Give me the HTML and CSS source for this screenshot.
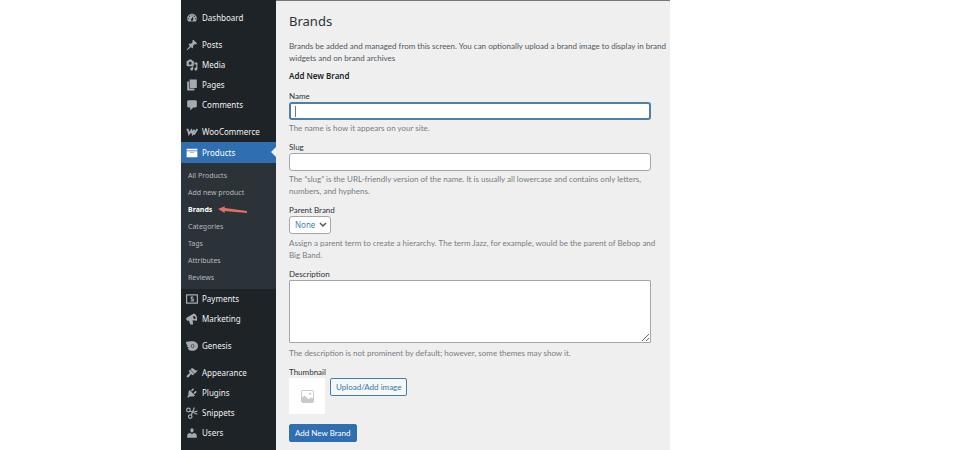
FILE: index.html
```
<!DOCTYPE html>
<html lang="en">
<head>
    <meta charset="UTF-8">
    <meta name="viewport" content="width=device-width, initial-scale=1.0">
    <title>Brands</title>
    <link rel="stylesheet" href="styles.css">
</head>
<body>
    <div class="admin">
        <nav class="menu">
            <a class="menu-item" href="#">
                <svg viewBox="0 0 20 20"><path d="M3.76 16h12.48c1.1-1.37 1.76-3.11 1.76-5 0-4.42-3.58-8-8-8s-8 3.58-8 8c0 1.89.66 3.63 1.76 5zM10 4c.55 0 1 .45 1 1s-.45 1-1 1-1-.45-1-1 .45-1 1-1zM6 6c.55 0 1 .45 1 1s-.45 1-1 1-1-.45-1-1 .45-1 1-1zm8 0c.55 0 1 .45 1 1s-.45 1-1 1-1-.45-1-1 .45-1 1-1zm-5.37 5.55L12 7v6c0 1.1-.9 2-2 2s-2-.9-2-2c0-.57.24-1.08.63-1.45zM4 10c.55 0 1 .45 1 1s-.45 1-1 1-1-.45-1-1 .45-1 1-1zm12 0c.55 0 1 .45 1 1s-.45 1-1 1-1-.45-1-1 .45-1 1-1z"/></svg>
                Dashboard
            </a>
            <a class="menu-item group-start" href="#">
                <svg viewBox="0 0 20 20"><path d="M10.44 3.02l1.82-1.82 6.36 6.35-1.83 1.82c-1.05-.68-2.48-.57-3.41.36l-.75.75c-.92.93-1.04 2.35-.35 3.41l-1.83 1.82-2.41-2.41-2.8 2.79c-.42.42-3.38 2.71-3.8 2.29s1.86-3.39 2.28-3.81l2.79-2.79L4.1 9.36l1.83-1.82c1.05.69 2.48.57 3.4-.36l.75-.75c.93-.92 1.05-2.35.36-3.41z"/></svg>
                Posts
            </a>
            <a class="menu-item" href="#">
                <svg viewBox="0 0 20 20"><path d="M13 11V4c0-.55-.45-1-1-1h-1.67L9 1H5L3.67 3H2c-.55 0-1 .45-1 1v7c0 .55.45 1 1 1h10c.55 0 1-.45 1-1zM7 4.5c1.38 0 2.5 1.12 2.5 2.5S8.38 9.5 7 9.5 4.5 8.38 4.5 7 5.62 4.5 7 4.5zM14 6h5v10.5c0 1.38-1.12 2.5-2.5 2.5S14 17.88 14 16.5s1.12-2.5 2.5-2.5c.17 0 .34.02.5.05V9h-3V6zm-4 8.05V13h2v3.5c0 1.38-1.12 2.5-2.5 2.5S7 17.88 7 16.5 8.12 14 9.5 14c.17 0 .34.02.5.05z"/></svg>
                Media
            </a>
            <a class="menu-item" href="#">
                <svg viewBox="0 0 20 20"><path d="M6 15V1h12v14H6zm-1 1h9v3H2V4h3v12z"/></svg>
                Pages
            </a>
            <a class="menu-item" href="#">
                <svg viewBox="0 0 20 20"><path d="M4 2h12c1 0 2 1 2 2v8c0 1-1 2-2 2h-4l-5 5v-5H4c-1 0-2-1-2-2V4c0-1 1-2 2-2z"/></svg>
                Comments
            </a>
            <a class="menu-item group-start" href="#">
                <svg viewBox="0 0 20 20"><path class="bold" d="M1 6h2l2 7 4-6 2 6 3-7M10 8l2 5h2l5-8"/></svg>
                WooCommerce
            </a>
            <a class="menu-item current" href="#">
                <svg viewBox="0 0 20 20"><path d="M19 3v3H1V3h18zM1 7h18v10H1V7zm12 3V9H7v1h6z"/></svg>
                Products
            </a>
            <div class="submenu">
                <a href="#">All Products</a>
                <a href="#">Add new product</a>
                <a class="active" href="#">Brands
                    <svg class="pointer" viewBox="0 0 32 8"><path d="M1 3L8 0v2l23 3v2L8 5v2z"/></svg>
                </a>
                <a href="#">Categories</a>
                <a href="#">Tags</a>
                <a href="#">Attributes</a>
                <a href="#">Reviews</a>
            </div>
            <a class="menu-item" href="#">
                <svg viewBox="0 0 20 20"><path class="line" d="M1 3h18v14H1zM12 7H9v3h3v3H8"/></svg>
                Payments
            </a>
            <a class="menu-item" href="#">
                <svg viewBox="0 0 20 20"><path fill-rule="evenodd" d="M1 8l12-7c4 1 7 7 5 12l-7-1 1 7H7l-2-6H3C0 13 0 9 1 8zm12-3c-2 1-1 5 2 5 2-1 1-5-2-5z"/></svg>
                Marketing
            </a>
            <a class="menu-item group-start" href="#">
                <svg viewBox="0 0 20 20"><path fill-rule="evenodd" d="M0 3c3 0 5-1 10-1 6 0 10 3 10 8s-4 8-9 8c-4 0-7-2-8-4l2-1-4-2 2-1C1 8 0 6 0 3zm11 4a3 3 0 1 0 0 6 3 3 0 0 0 0-6zm0 1a2 2 0 1 1 0 4 2 2 0 0 1 0-4z"/></svg>
                Genesis
            </a>
            <a class="menu-item group-start" href="#">
                <svg viewBox="0 0 20 20"><path d="M14.48 11.06L7.41 3.99l1.5-1.5c.5-.56 2.3-.47 3.51.32 1.21.8 1.43 1.28 2.91 2.1 1.18.64 2.45 1.26 4.45.85zm-.71.71L6.7 4.7 4.93 6.47c-.39.39-.39 1.02 0 1.41l1.06 1.06c.39.39.39 1.03 0 1.42-.6.6-1.43 1.11-2.21 1.69-.35.26-.7.53-1.01.84C1.43 14.23.4 16.08 1.4 17.07c.99 1 2.84-.03 4.18-1.36.31-.31.58-.66.85-1.02.57-.78 1.08-1.61 1.69-2.21.39-.39 1.02-.39 1.41 0l1.06 1.06c.39.39 1.02.39 1.41 0z"/></svg>
                Appearance
            </a>
            <a class="menu-item" href="#">
                <svg viewBox="0 0 20 20"><path d="M13.11 4.36L9.87 7.6 8 5.73l3.24-3.24c.35-.34 1.05-.2 1.56.32.52.51.66 1.21.31 1.55zm-8 1.77l.91-1.12 9.01 9.01-1.19.84c-.71.71-2.63 1.16-3.82 1.16H6.14L4.9 17.26c-.59.59-1.54.59-2.12 0-.59-.58-.59-1.53 0-2.12l1.24-1.24v-3.88c0-1.13.4-3.19 1.09-3.89zm7.26 3.97l3.24-3.24c.34-.35 1.04-.21 1.55.31.52.51.66 1.21.31 1.55l-3.24 3.25z"/></svg>
                Plugins
            </a>
            <a class="menu-item" href="#">
                <svg viewBox="0 0 20 20"><path class="line" d="M7 7l12 5M9 13l5-12M7 5a3 3 0 1 1-6 0 3 3 0 0 1 6 0zM10 16a3 3 0 1 1-6 0 3 3 0 0 1 6 0zM11 9l8-2"/></svg>
                Snippets
            </a>
            <a class="menu-item" href="#">
                <svg viewBox="0 0 20 20"><path d="M10 9.25c-2.27 0-2.73-3.44-2.73-3.44C7 4.02 7.82 2 9.97 2c2.16 0 2.98 2.02 2.71 3.81 0 0-.41 3.44-2.68 3.44zM7 10l3 2 3-2c3 0 5 2 5 5v3H2v-3c0-3 2-5 5-5z"/></svg>
                Users
            </a>
        </nav>

        <main class="content">
            <h1>Brands</h1>
            <p class="intro">Brands be added and managed from this screen. You can optionally upload a brand image to display in brand widgets and on brand archives</p>

            <form class="brand-form">
                <h2>Add New Brand</h2>
                <div class="field">
                    <label for="name">Name</label>
                    <input class="text-input focused" type="text" id="name">
                    <p>The name is how it appears on your site.</p>
                </div>
                <div class="field">
                    <label for="slug">Slug</label>
                    <input class="text-input" type="text" id="slug">
                    <p>The “slug” is the URL-friendly version of the name. It is usually all lowercase and contains only letters, numbers, and hyphens.</p>
                </div>
                <div class="field">
                    <label for="parent">Parent Brand</label>
                    <div class="select-wrap">
                        <select id="parent">
                            <option>None</option>
                        </select>
                        <svg viewBox="0 0 8 6"><path d="M1 1l3 3 3-3"/></svg>
                    </div>
                    <p>Assign a parent term to create a hierarchy. The term Jazz, for example, would be the parent of Bebop and Big Band.</p>
                </div>
                <div class="field">
                    <label for="description">Description</label>
                    <textarea id="description"></textarea>
                    <p>The description is not prominent by default; however, some themes may show it.</p>
                </div>
                <div class="field">
                    <label for="upload">Thumbnail</label>
                    <div class="thumb-row">
                        <div class="thumb">
                            <svg viewBox="0 0 14 14"><path fill-rule="evenodd" d="M1 0h12v1h1v12h-1v1H1v-1H0V1h1zM1 1v7l3-2 4 4 3-2 2 1V1zM9 3h2v2H9z"/></svg>
                        </div>
                        <button class="button" type="button" id="upload">Upload/Add image</button>
                    </div>
                </div>
                <button class="button primary" type="button">Add New Brand</button>
            </form>
        </main>
    </div>
</body>
</html>
```
FILE: styles.css
```
* {
    margin: 0;
    padding: 0;
    box-sizing: border-box;
}

body {
    font-family: Lato, 'Noto Sans', sans-serif;
    font-size: 8px;
    line-height: 12px;
    color: #50575e;
    background: #fff;
    height: 100vh;
    overflow: hidden;
}

.admin {
    display: flex;
    min-height: 100vh;
    margin: 0 283px 0 181px;
}

/* Sidebar */
.menu {
    flex: 0 0 95px;
    padding-top: 8px;
    background: #1d2327;
    font-family: 'Noto Sans', sans-serif;
}

.menu-item {
    display: flex;
    align-items: center;
    gap: 4px;
    height: 20px;
    padding-left: 5px;
    color: #f0f0f1;
    text-decoration: none;
}

.menu-item svg {
    width: 12px;
    height: 12px;
    fill: #a7aaad;
}

.menu-item .line,
.menu-item .bold {
    fill: none;
    stroke: #a7aaad;
    stroke-width: 2;
}

.menu-item .bold {
    stroke-width: 3;
}

.group-start {
    margin-top: 7px;
}

.menu .current {
    position: relative;
    height: 21px;
    background: #2f6fb1;
    color: #fff;
}

.current svg {
    fill: #fff;
}

.current::after {
    content: '';
    position: absolute;
    right: 0;
    top: 5px;
    border: 5px solid transparent;
    border-left-width: 0;
    border-right-color: #efefef;
}

.submenu {
    padding: 4px 0 3px;
    background: #2c3338;
}

.submenu a {
    display: flex;
    align-items: center;
    gap: 5px;
    height: 17px;
    padding-left: 7px;
    color: #b4b9be;
    font-size: 7px;
    text-decoration: none;
}

.submenu .active {
    color: #fff;
    font-weight: 700;
}

.pointer {
    width: 31px;
    height: 8px;
    fill: #e2705e;
}

/* Content */
.content {
    flex: 1;
    padding: 12px 2px 0 13px;
    background: #efefef;
    border-top: 1px solid #77777a;
}

h1 {
    margin-bottom: 11px;
    color: #2c3338;
    font-family: 'Noto Sans', sans-serif;
    font-size: 13px;
    font-weight: 400;
    line-height: 16px;
}

h2 {
    margin: 6px 0 9px;
    color: #1d2327;
    font-family: 'Noto Sans', sans-serif;
    font-size: 8px;
    font-weight: 600;
    line-height: 12px;
}

.brand-form {
    padding-right: 17px;
}

.field {
    margin-bottom: 8px;
}

.field label {
    display: block;
    color: #2c3338;
    line-height: 11px;
}

.field p {
    margin-right: -8px;
    padding-top: 2px;
    color: #787c82;
}

.text-input,
textarea,
select {
    display: block;
    font: inherit;
    background: #fff;
    border: 1px solid #a4a7aa;
    border-radius: 3px;
}

.text-input {
    width: 100%;
    height: 18px;
    padding: 0 5px;
}

.focused {
    border: 2px solid #4d7fa8;
    background: linear-gradient(#777, #777) 4px center / 1px 11px no-repeat #fff;
    outline: none;
}

textarea {
    width: 100%;
    height: 63px;
    margin-bottom: 2px;
    border-radius: 1px;
    resize: vertical;
}

.select-wrap {
    display: grid;
    align-items: center;
    width: fit-content;
    margin-bottom: 1px;
}

.select-wrap select,
.select-wrap svg {
    grid-area: 1 / 1;
}

.select-wrap select {
    height: 18px;
    padding: 0 14px 0 5px;
    color: #3f7fae;
    font-family: 'Noto Sans', sans-serif;
    appearance: none;
}

.select-wrap svg {
    justify-self: end;
    width: 8px;
    height: 6px;
    margin-right: 4px;
    fill: none;
    stroke: #50575e;
    stroke-width: 1.5;
    pointer-events: none;
}

.thumb-row {
    display: flex;
    align-items: flex-start;
    gap: 5px;
    margin-bottom: 10px;
}

.thumb {
    display: grid;
    place-items: center;
    width: 36px;
    height: 36px;
    background: #fff;
}

.thumb svg {
    width: 13px;
    height: 13px;
    fill: #c9cacc;
}

.button {
    height: 18px;
    padding: 0 5px;
    font: inherit;
    color: #3577ab;
    background: #f6f7f7;
    border: 1px solid #3f7fae;
    border-radius: 2px;
}

.primary {
    color: #fff;
    background: #2f6fb1;
    border-color: #2f6fb1;
}
```
